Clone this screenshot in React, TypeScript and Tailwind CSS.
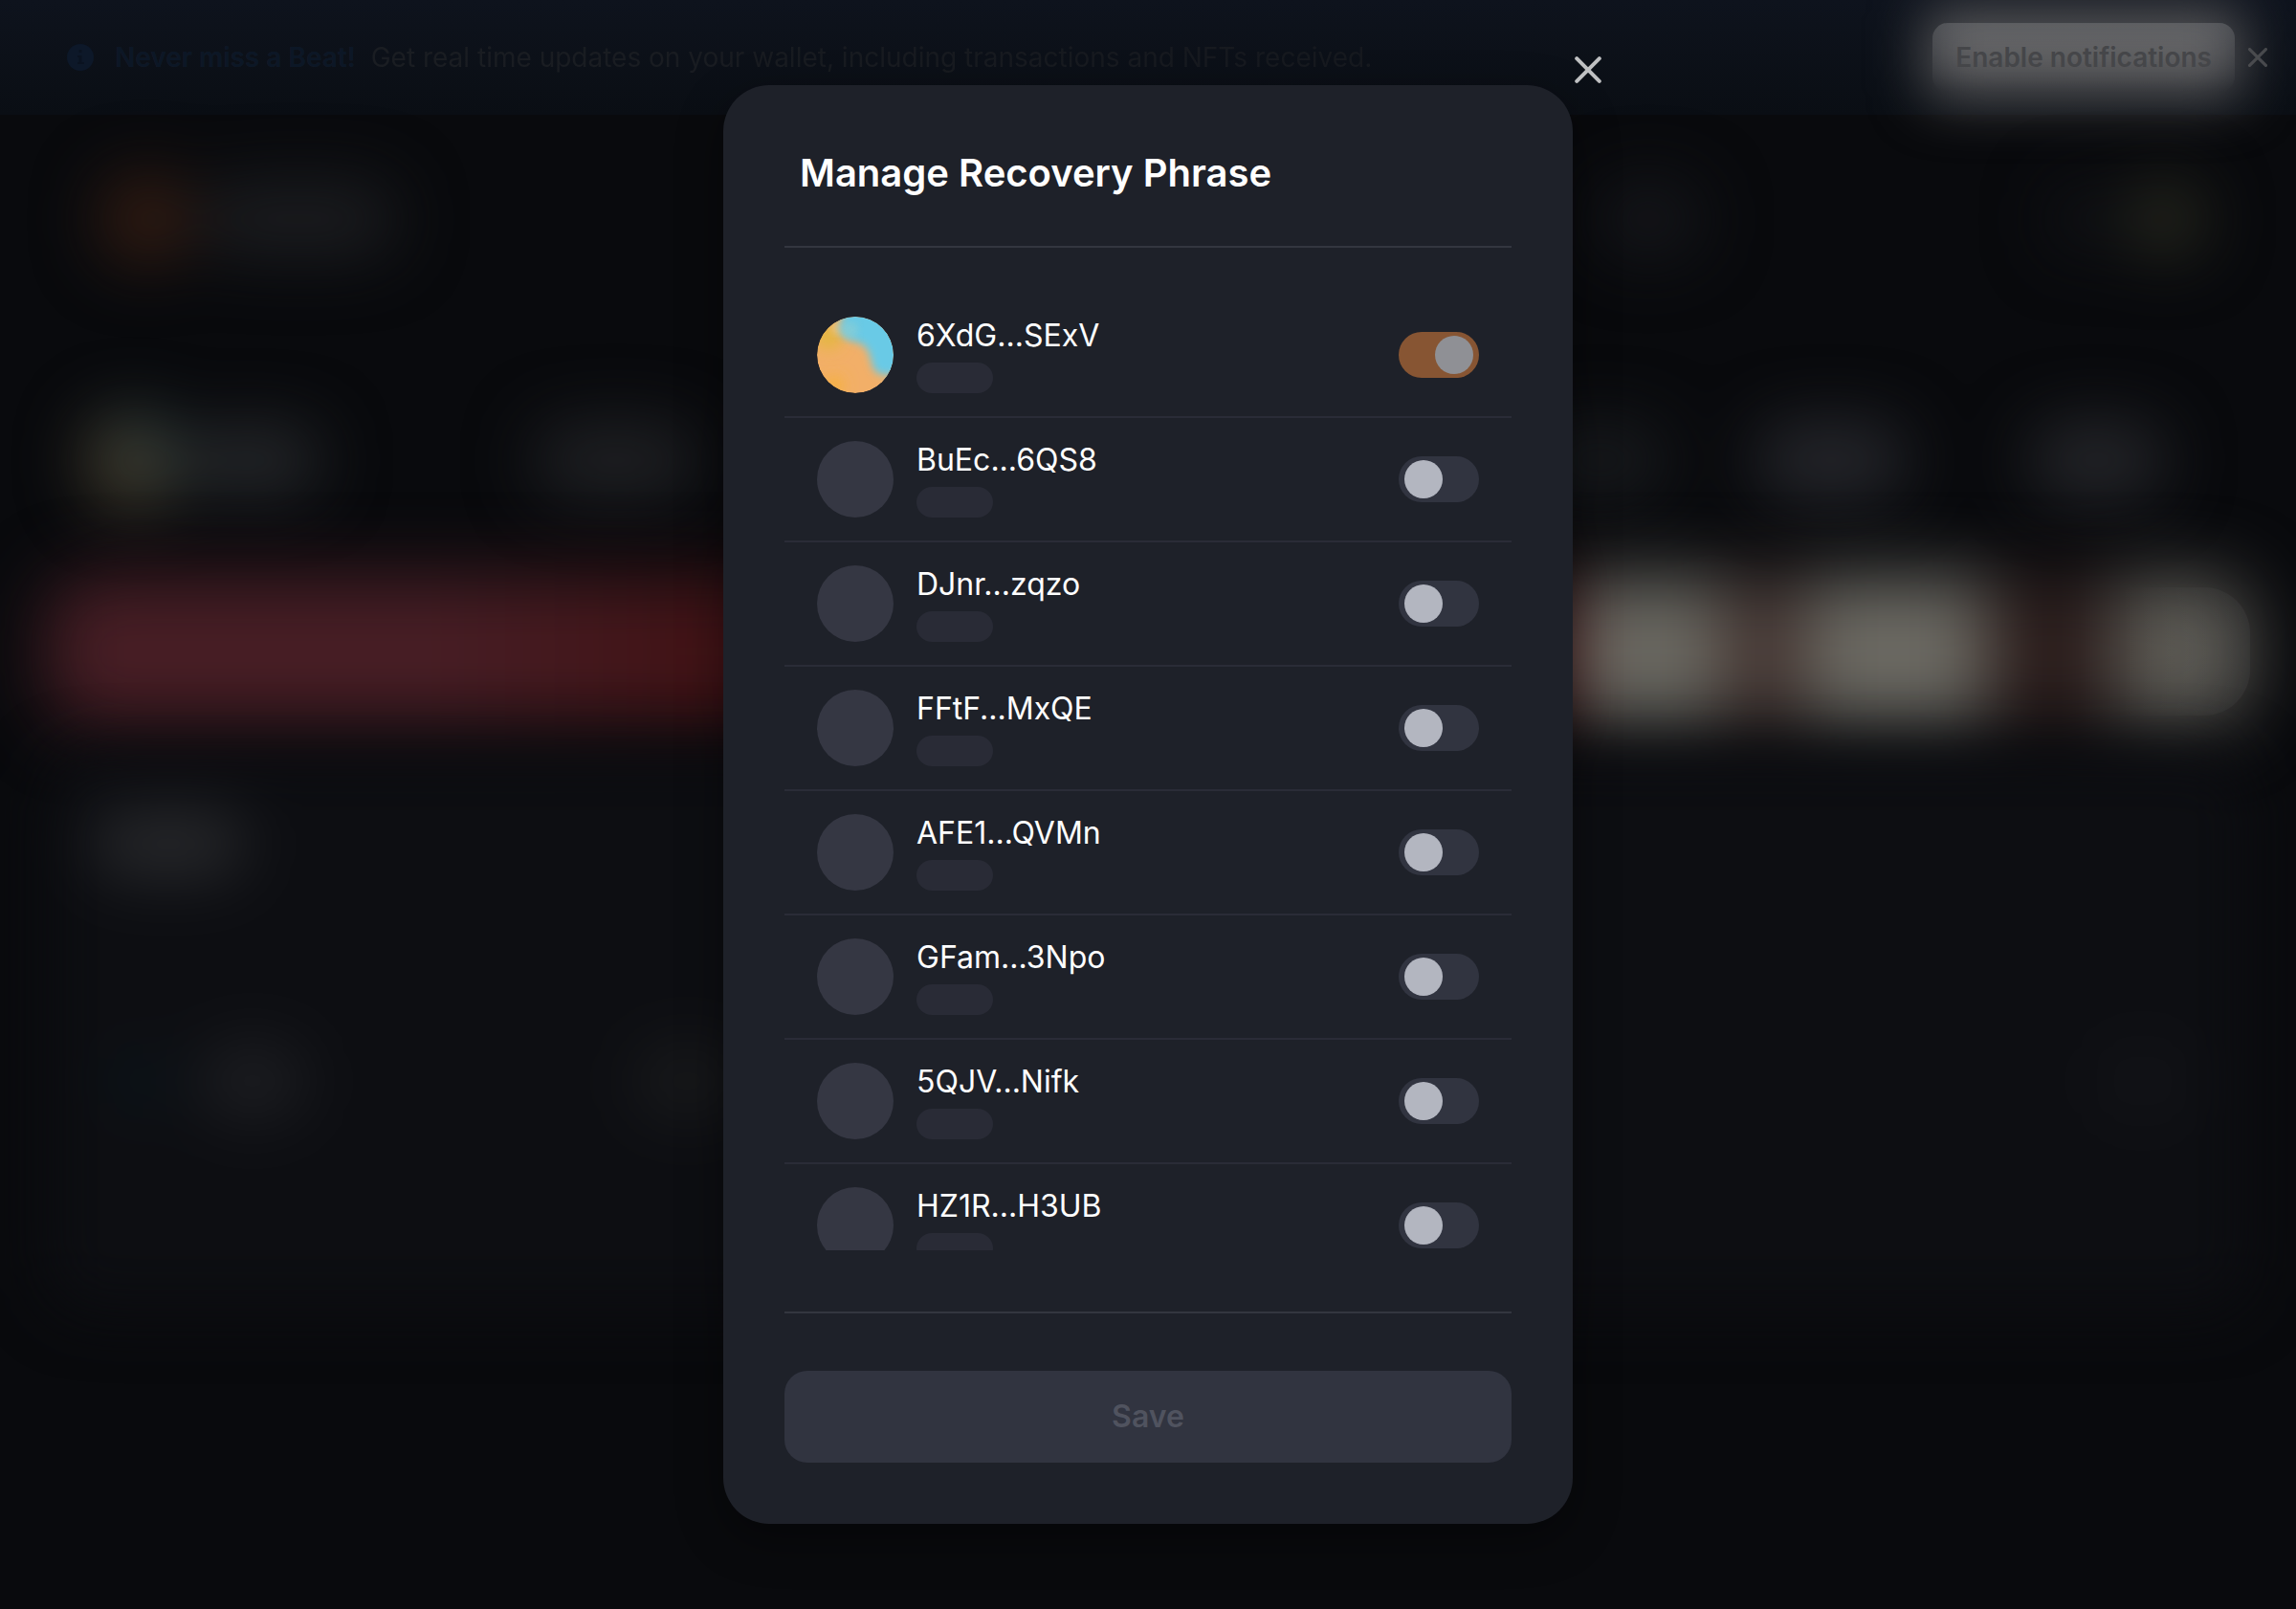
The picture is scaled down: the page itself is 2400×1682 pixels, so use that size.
import React, { useState } from "react";

const WALLETS = [
  "6XdG...SExV",
  "BuEc...6QS8",
  "DJnr...zqzo",
  "FFtF...MxQE",
  "AFE1...QVMn",
  "GFam...3Npo",
  "5QJV...Nifk",
  "HZ1R...H3UB",
];

function GradientAvatar() {
  return (
    <svg viewBox="0 0 80 80" className="size-20 shrink-0 rounded-full" aria-hidden="true">
      <defs>
        <filter id="soft" x="-30%" y="-30%" width="160%" height="160%">
          <feGaussianBlur stdDeviation="4" />
        </filter>
        <filter id="softer" x="-100%" y="-100%" width="300%" height="300%">
          <feGaussianBlur stdDeviation="8" />
        </filter>
        <clipPath id="disc">
          <circle cx="40" cy="40" r="40" />
        </clipPath>
      </defs>
      <g clipPath="url(#disc)">
        <rect width="80" height="80" fill="#f2af68" />
        <circle cx="18" cy="72" r="10" fill="#f6b138" filter="url(#softer)" />
        <circle cx="12" cy="20" r="14" fill="#e3b73f" filter="url(#softer)" />
        <circle cx="22" cy="12" r="6" fill="#e8c68c" filter="url(#soft)" />
        <path
          d="M30 -14 L25 6 C22 18 30 24 42 27 C56 31 55 44 59 54 C63 63 74 62 94 60 L94 -14 Z"
          fill="#69cae6"
          filter="url(#soft)"
        />
        <circle cx="34" cy="14" r="9" fill="#8dcdd2" opacity="0.7" filter="url(#soft)" />
      </g>
    </svg>
  );
}

function CrossIcon({ className, width }: { className: string; width: number }) {
  return (
    <svg viewBox="0 0 28 28" className={className} fill="none" stroke="currentColor" strokeWidth={width} strokeLinecap="round" aria-hidden="true">
      <path d="M2.200 2.200 25.800 25.800M25.800 2.200 2.200 25.800" />
    </svg>
  );
}

function NotificationBanner() {
  return (
    <header className="flex h-30 items-center bg-linear-to-b from-[#0e131d] to-[#0a0e14] pr-[30px] pl-[70px] text-[28px] leading-9">
      <svg viewBox="0 0 28 28" className="mr-[22px] size-7 shrink-0" aria-hidden="true">
        <circle cx="14" cy="14" r="14" fill="#0d1829" />
        <path d="M12.500 6h3v3h-3zM11 12h4.500v7H18v2h-7v-2h1.500v-5H11z" fill="#0a1220" />
      </svg>
      <p className="flex-1 bg-linear-to-r from-[#1b1e23] to-[#14171d] bg-clip-text whitespace-nowrap text-transparent">
        <strong className="mr-4 font-semibold text-[#0c1726]">Never miss a Beat!</strong>
        Get real time updates on your wallet, including transactions and NFTs received.
      </p>
      <div className="relative mr-3.5">
        <div className="absolute -inset-x-2 -top-4 -bottom-2 rounded-2xl bg-[#555557] blur-[28px]" aria-hidden="true" />
        <button
          type="button"
          className="relative h-18 rounded-2xl bg-linear-to-b from-white/15 to-transparent px-6 font-semibold text-[#454649]"
        >
          Enable notifications
        </button>
      </div>
      <button type="button" aria-label="Dismiss" className="text-[#45474b]">
        <CrossIcon className="size-5" width={4.5} />
      </button>
    </header>
  );
}

function BackgroundPage() {
  return (
    <div className="flex min-h-screen flex-col bg-[#090a0d]">
      <NotificationBanner />
      <div aria-hidden="true" className="flex flex-col">
        <div className="flex h-[218px] items-center px-24 blur-[34px]">
          <div className="ml-2 size-24 rounded-full bg-[#331c12]" />
          <div className="ml-2 h-20 w-52 rounded-full bg-[#1b1c1f]" />
          <div className="mr-[365px] ml-auto h-20 w-28 rounded-full bg-[#15161a]" />
          <div className="mr-4 h-18 w-16 rounded-full bg-[#111216]" />
          <div className="size-20 rounded-full bg-[#28291f]" />
        </div>
        <div className="flex h-[266px] items-center px-22 pt-5 blur-[34px]">
          <div className="size-26 shrink-0 rounded-full bg-linear-to-bl from-[#16323c] via-[#3e3e32] to-[#4a3720]" />
          <div className="mr-[220px] h-18 w-36 rounded-full bg-[#25272a]" />
          <div className="h-20 w-44 rounded-full bg-[#1f2023]" />
          <div className="ml-auto h-20 w-36 rounded-full bg-[#181a1d]" />
          <div className="ml-[90px] h-20 w-40 rounded-full bg-[#26272c]" />
          <div className="mr-12 ml-[126px] h-20 w-36 rounded-full bg-[#25262a]" />
        </div>
        <div className="relative mx-12 h-[154px]">
          <div className="flex h-full rounded-[48px] bg-[#481e25] blur-[38px]">
            <div className="h-full w-[18%]" />
            <div className="h-full w-[12%] bg-linear-to-r from-[#481e25] to-[#421316]" />
            <div className="flex h-full flex-1 overflow-hidden rounded-r-[48px] bg-[#421316]">
              <div className="ml-[56%] h-full w-[10%] bg-[#6a6861]" />
              <div className="h-full w-[5%] bg-[#40302d]" />
              <div className="h-full w-[12%] bg-[#6c6a63]" />
              <div className="h-full flex-1 bg-[#2a1c1b]" />
              <div className="h-full w-[9%] bg-[#5a5852]" />
            </div>
          </div>
          <div className="absolute inset-x-0 inset-y-2.5 rounded-[48px] bg-linear-to-r from-transparent from-94% to-white/4" />
        </div>
        <div className="mx-12 mt-8 flex h-[580px] flex-col rounded-[48px] bg-[#0d0e12] px-12 py-14 blur-[32px]">
          <div className="h-18 w-40 rounded-full bg-[#26272a]" />
          <div className="mt-[172px] flex h-20 items-center">
            <div className="ml-6 size-14 rounded-full bg-[#0a161c]" />
            <div className="ml-8 h-20 w-28 rounded-full bg-[#1c1d21]" />
            <div className="ml-[342px] h-20 w-28 rounded-full bg-[#18191b]" />
            <div className="mr-4 ml-auto h-20 w-24 rounded-full bg-[#121317]" />
          </div>
        </div>
      </div>
    </div>
  );
}

function WalletRow({ address, primary, checked, onToggle }: { address: string; primary: boolean; checked: boolean; onToggle: () => void }) {
  const id = `wallet-${address}`;
  return (
    <li className="flex items-center border-b-2 border-[#2a2c37] px-[34px] py-6">
      {primary ? <GradientAvatar /> : <span className="size-20 shrink-0 rounded-full bg-[#353743]" />}
      <div className="ml-6 flex flex-1 flex-col gap-2">
        <label htmlFor={id} className="text-[32px] leading-10 text-white">
          {address}
        </label>
        <span className="h-8 w-20 rounded-full bg-[#292b36]" />
      </div>
      <input
        id={id}
        type="checkbox"
        role="switch"
        checked={checked}
        disabled={primary}
        onChange={onToggle}
        className="h-12 w-21 shrink-0 appearance-none rounded-full bg-[#313440] px-1.5 py-1 before:block before:size-10 before:rounded-full before:bg-[#b3b6c0] checked:bg-[#fe8f33] checked:before:translate-x-8 disabled:checked:bg-[#875533] disabled:checked:before:bg-[#8f9095]"
      />
    </li>
  );
}

export default function App() {
  const [enabled, setEnabled] = useState<string[]>([WALLETS[0]]);
  const toggle = (address: string) =>
    setEnabled((list) => (list.includes(address) ? list.filter((a) => a !== address) : [...list, address]));

  return (
    <div className="relative min-h-screen overflow-hidden bg-[#090a0d] font-['Inter',sans-serif]">
      <BackgroundPage />
      <div className="absolute inset-0 flex items-center justify-center">
        <section
          role="dialog"
          aria-modal="true"
          aria-labelledby="dialog-title"
          className="relative w-full max-w-[888px] rounded-[48px] bg-[#1e2129] p-16 shadow-[0_16px_48px_rgba(0,0,0,0.4)]"
        >
          <button type="button" aria-label="Close" className="absolute bottom-full left-full mb-0.5 ml-0.5 text-[#bfc0c2]">
            <CrossIcon className="size-7" width={4} />
          </button>
          <h1 id="dialog-title" className="px-4 text-[40px] leading-14 font-semibold text-white">
            Manage Recovery Phrase
          </h1>
          <hr className="mt-12 border-t-2 border-[#33363f]" />
          <ul className="mt-12 max-h-[1000px] overflow-y-auto [scrollbar-width:none]">
            {WALLETS.map((address, i) => (
              <WalletRow
                key={address}
                address={address}
                primary={i === 0}
                checked={enabled.includes(address)}
                onToggle={() => toggle(address)}
              />
            ))}
          </ul>
          <hr className="mt-16 border-t-2 border-[#33363f]" />
          <button type="button" disabled className="mt-15 h-24 w-full rounded-3xl bg-[#313440] text-[32px] font-semibold text-[#50535f]">
            Save
          </button>
        </section>
      </div>
    </div>
  );
}
